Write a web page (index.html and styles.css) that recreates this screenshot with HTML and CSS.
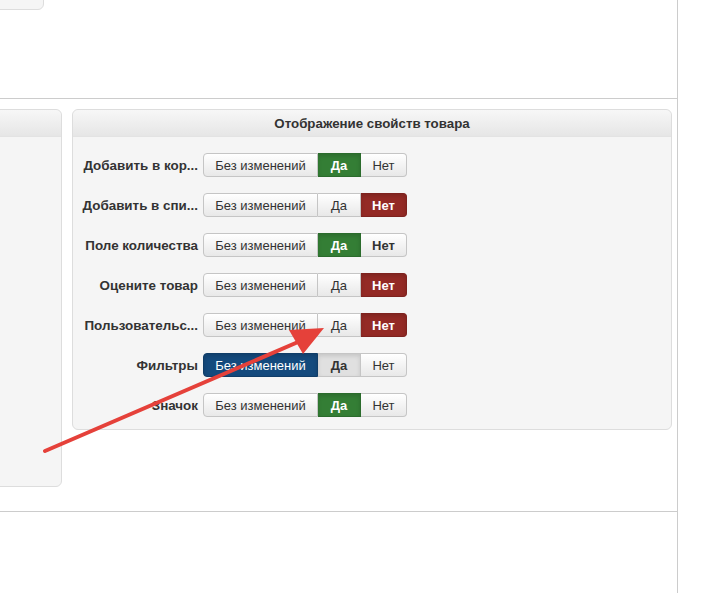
FILE: index.html
```html
<!DOCTYPE html>
<html lang="ru">
<head>
    <meta charset="UTF-8">
    <meta name="viewport" content="width=device-width, initial-scale=1.0">
    <title>Свойства товара</title>
    <link rel="stylesheet" href="styles.css">
</head>
<body>
    <div class="page">
        <section class="block block-top">
            <div class="panel panel-stub-top"></div>
        </section>

        <section class="block block-props">
            <div class="panel panel-stub-left">
                <div class="panel-head"></div>
            </div>

            <div class="panel panel-props">
                <div class="panel-head">Отображение свойств товара</div>
                <div class="panel-body">
                    <div class="prop-row">
                        <label class="prop-label" title="Добавить в корзину">Добавить в кор...</label>
                        <div class="btn-group">
                            <button class="btn btn-keep">Без изменений</button>
                            <button class="btn btn-yes active">Да</button>
                            <button class="btn btn-no">Нет</button>
                        </div>
                    </div>
                    <div class="prop-row">
                        <label class="prop-label" title="Добавить в список сравнения">Добавить в спи...</label>
                        <div class="btn-group">
                            <button class="btn btn-keep">Без изменений</button>
                            <button class="btn btn-yes">Да</button>
                            <button class="btn btn-no active">Нет</button>
                        </div>
                    </div>
                    <div class="prop-row">
                        <label class="prop-label">Поле количества</label>
                        <div class="btn-group">
                            <button class="btn btn-keep">Без изменений</button>
                            <button class="btn btn-yes active">Да</button>
                            <button class="btn btn-no bold">Нет</button>
                        </div>
                    </div>
                    <div class="prop-row">
                        <label class="prop-label">Оцените товар</label>
                        <div class="btn-group">
                            <button class="btn btn-keep">Без изменений</button>
                            <button class="btn btn-yes">Да</button>
                            <button class="btn btn-no active">Нет</button>
                        </div>
                    </div>
                    <div class="prop-row">
                        <label class="prop-label" title="Пользовательские поля">Пользовательс...</label>
                        <div class="btn-group">
                            <button class="btn btn-keep">Без изменений</button>
                            <button class="btn btn-yes">Да</button>
                            <button class="btn btn-no active">Нет</button>
                        </div>
                    </div>
                    <div class="prop-row">
                        <label class="prop-label">Фильтры</label>
                        <div class="btn-group">
                            <button class="btn btn-keep active">Без изменений</button>
                            <button class="btn btn-yes pressed">Да</button>
                            <button class="btn btn-no">Нет</button>
                        </div>
                    </div>
                    <div class="prop-row">
                        <label class="prop-label">Значок</label>
                        <div class="btn-group">
                            <button class="btn btn-keep">Без изменений</button>
                            <button class="btn btn-yes active">Да</button>
                            <button class="btn btn-no">Нет</button>
                        </div>
                    </div>
                </div>
            </div>
        </section>

        <section class="block block-bottom"></section>
    </div>

    <!-- pointer drawn on top of the form -->
    <svg class="pointer" width="713" height="593" viewBox="0 0 713 593">
        <line x1="45" y1="451" x2="305" y2="339" stroke="#e5413a" stroke-width="4" stroke-linecap="round"/>
        <polygon points="324,328 289,330 303,354" fill="#e5413a"/>
    </svg>
</body>
</html>
```

FILE: styles.css
```css
body {
    margin: 0;
    font-family: "Liberation Sans", Arial, sans-serif;
    font-size: 13px;
    color: #333;
    background: #fff;
    overflow: hidden;
    position: relative;
}

/* Page frame */
.page {
    width: 677px;
    height: 593px;
    border-right: 1px solid #ccc;
}

.block {
    border-bottom: 1px solid #ccc;
}

.block-top {
    display: flex;
    height: 98px;
}

.block-props {
    display: flex;
    align-items: flex-start;
    gap: 10px;
    padding: 10px 5px 24px 0;
}

/* Panels */
.panel {
    background: #f5f5f5;
    border: 1px solid #ddd;
    border-radius: 6px;
    box-sizing: border-box;
}

.panel-stub-top {
    width: 200px;
    height: 60px;
    margin: -50px 0 0 -156px;
}

.panel-stub-left {
    width: 200px;
    height: 378px;
    margin-left: -138px;
    flex-shrink: 0;
}

.panel-props {
    flex: 1;
}

.panel-head {
    height: 26px;
    line-height: 27px;
    text-align: center;
    font-size: 13.3px;
    font-weight: bold;
    color: #333;
    background: linear-gradient(#f7f7f7, #e6e6e6);
    border-bottom: 1px solid #e3e3e3;
    border-radius: 6px 6px 0 0;
}

.panel-body {
    display: flex;
    flex-direction: column;
    gap: 16px;
    padding: 16px 5px 12px;
}

/* Property rows */
.prop-row {
    display: flex;
    align-items: center;
    gap: 5px;
}

.prop-label {
    width: 120px;
    text-align: right;
    font-size: 13.4px;
    font-weight: bold;
    color: #333;
    white-space: nowrap;
}

.btn-group {
    display: flex;
}

.btn {
    box-sizing: border-box;
    height: 24px;
    padding: 0;
    margin: 0;
    font-family: inherit;
    font-size: 13px;
    color: #333;
    background: linear-gradient(#fff, #e8e8e8);
    border: 1px solid #c5c5c5;
    border-left-width: 0;
    box-shadow: inset 0 1px 0 rgba(255, 255, 255, 0.6);
}

.btn-keep {
    width: 115px;
    border-left-width: 1px;
    border-radius: 4px 0 0 4px;
}

.btn-yes {
    width: 43px;
}

.btn-no {
    width: 46px;
    border-radius: 0 4px 4px 0;
}

.btn.bold {
    font-weight: bold;
}

.btn.active {
    color: #fff;
    font-weight: bold;
    box-shadow: inset 0 2px 4px rgba(0, 0, 0, 0.15);
}

.btn-yes.active {
    background: #347e35;
    border-color: #2b6b2c;
}

.btn-no.active {
    background: #942a25;
    border-color: #7e221e;
}

.btn-keep.active {
    font-weight: normal;
    background: #144a7d;
    border-color: #103d68;
}

.btn.pressed {
    font-weight: bold;
    background: #e0e0e0;
    box-shadow: inset 0 2px 4px rgba(0, 0, 0, 0.12);
}

.block-bottom {
    border-bottom: none;
}

.pointer {
    position: absolute;
    left: 0;
    top: 0;
    pointer-events: none;
}
```
